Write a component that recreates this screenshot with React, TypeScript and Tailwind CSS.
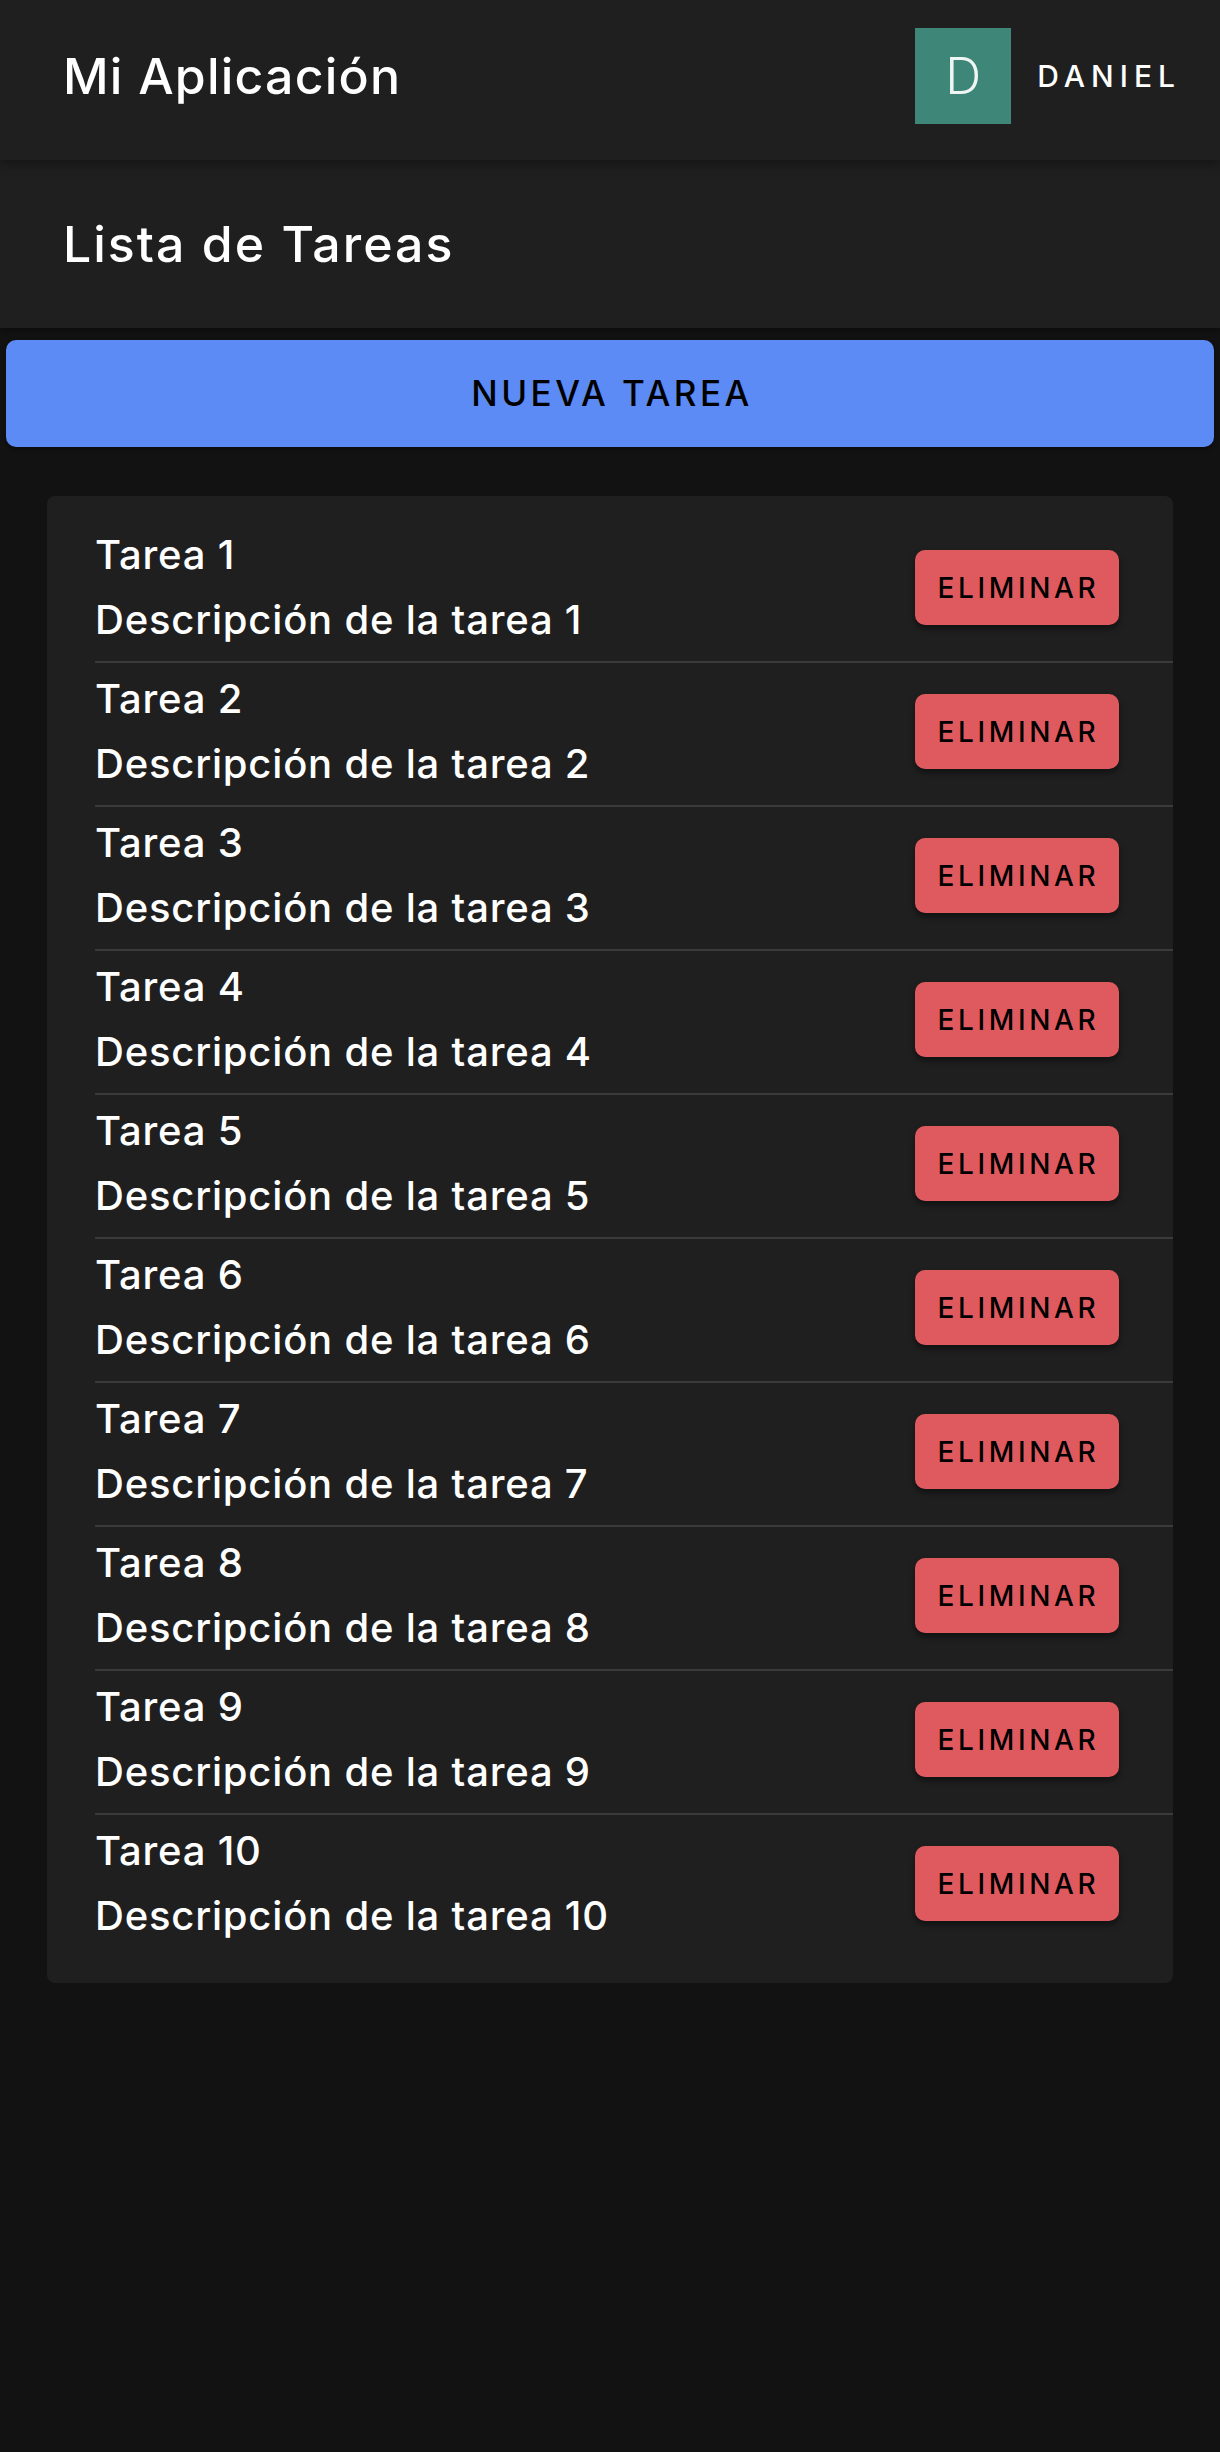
import React from "react";

const tasks = Array.from({ length: 10 }, (_, i) => ({
  id: i + 1,
  title: `Tarea ${i + 1}`,
  description: `Descripción de la tarea ${i + 1}`,
}));

function TaskRow({ title, description }: { title: string; description: string }) {
  return (
    <div className="flex items-center justify-between pl-[48px] pr-[54px] pt-[12px] pb-[17px]">
      <div className="flex flex-col gap-[17px] text-[40px] font-medium leading-[48px] tracking-[0.8px] text-white">
        <span>{title}</span>
        <span>{description}</span>
      </div>
      <button className="flex h-[75px] w-[204px] items-center justify-center rounded-[10px] bg-[#df5a5f] pl-[3px] text-[28px] font-medium tracking-[0.13em] text-black shadow-[0_4px_6px_rgba(0,0,0,0.45)]">
        ELIMINAR
      </button>
    </div>
  );
}

export default function App() {
  return (
    <div
      className="min-h-[2452px] w-full bg-[#121212]"
      style={{ fontFamily: "Inter, 'Noto Sans', sans-serif" }}
    >
      {/* app bar */}
      <header className="relative z-10 flex h-[160px] items-center justify-between bg-[#1f1f1f] pl-[63px] pr-[39px] pb-[8px] shadow-[0_4px_10px_rgba(0,0,0,0.35)]">
        <h1 className="text-[50px] font-medium leading-[60px] tracking-[1.2px] text-white">Mi Aplicación</h1>
        <div className="flex items-center gap-[26px]">
          <div className="flex h-[96px] w-[96px] items-center justify-center bg-[#3d8678] text-[50px] font-light text-[#eef5f3]">
            D
          </div>
          <span className="text-[30px] font-medium tracking-[0.2em] text-white">DANIEL</span>
        </div>
      </header>

      {/* page title */}
      <section className="bg-[#1f1f1f] pl-[63px] py-[54px] shadow-[0_3px_6px_rgba(0,0,0,0.3)]">
        <h2 className="text-[50px] font-medium leading-[60px] tracking-[2px] text-white">Lista de Tareas</h2>
      </section>

      <div className="px-[6px] pt-[12px]">
        <button className="flex h-[107px] w-full items-center justify-center rounded-[10px] bg-[#5c8bf5] pl-[4px] text-[35px] font-medium tracking-[0.1em] text-black shadow-[0_2px_4px_rgba(0,0,0,0.4)]">
          NUEVA TAREA
        </button>
      </div>

      <div className="mx-[47px] mt-[49px] rounded-[8px] bg-[#1f1f1f] pt-[23px] pb-[26px]">
        {tasks.map((t, i) => (
          <div key={t.id}>
            {i > 0 && <div className="ml-[48px] h-[2px] bg-[#3a3a3a]" />}
            <TaskRow title={t.title} description={t.description} />
          </div>
        ))}
      </div>
    </div>
  );
}
